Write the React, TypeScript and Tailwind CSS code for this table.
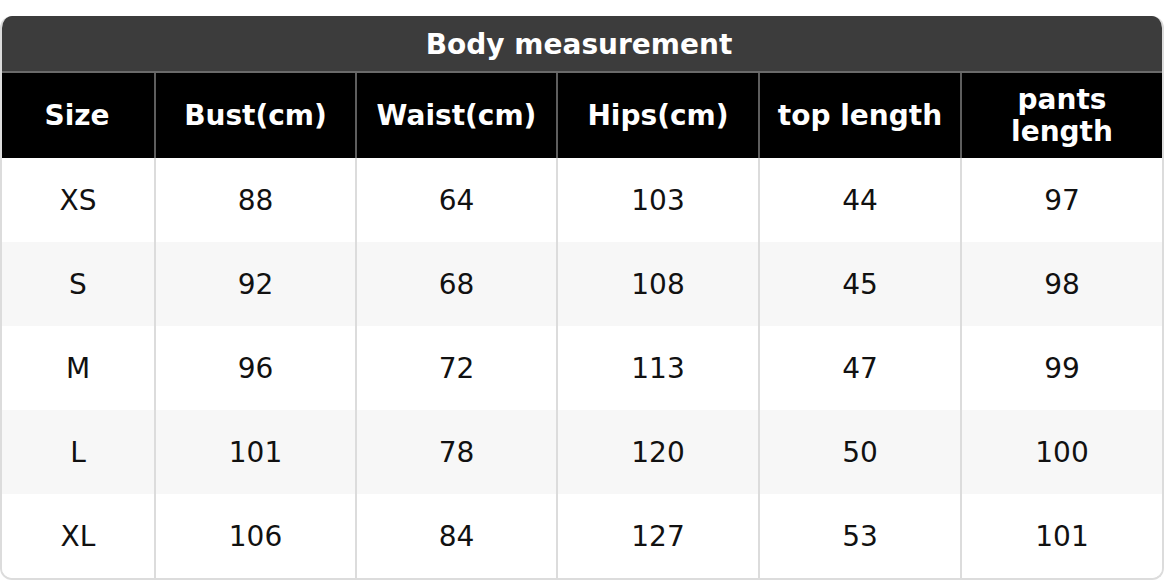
const headers = ["Size", "Bust(cm)", "Waist(cm)", "Hips(cm)", "top length", "pants length"];

const rows = [
  ["XS", "88", "64", "103", "44", "97"],
  ["S", "92", "68", "108", "45", "98"],
  ["M", "96", "72", "113", "47", "99"],
  ["L", "101", "78", "120", "50", "100"],
  ["XL", "106", "84", "127", "53", "101"],
];

const cols = "grid grid-cols-[156px_201px_201px_202px_202px_1fr]";

export default function App() {
  return (
    <div className="w-[1164px] h-[580px] bg-white pt-4 font-['DejaVu_Sans',sans-serif]">
      <div className="rounded-[12px] overflow-hidden border-2 border-t-0 border-[#dcdcdc] h-[564px] flex flex-col">
        <div className="h-[57px] bg-[#3c3c3c] flex items-center justify-center pt-[2px] pr-[6px] text-white font-bold text-[28px] border-b-2 border-[#6a6a6a] -mx-[2px]">
          Body measurement
        </div>
        <div className={`${cols} h-[85px] bg-black -ml-[2px]`}>
          {headers.map((h, i) => (
            <div
              key={h}
              className={`flex items-center justify-center text-center text-white font-bold text-[28px] leading-[32px] px-2 pt-[1px] ${i < headers.length - 1 ? "border-r-2 border-[#5e5e5e]" : ""}`}
            >
              {h}
            </div>
          ))}
        </div>
        {rows.map((r, ri) => (
          <div key={r[0]} className={`${cols} h-[84px] -ml-[2px] ${ri % 2 === 1 ? "bg-[#f7f7f7]" : "bg-white"}`}>
            {r.map((c, ci) => (
              <div
                key={ci}
                className={`flex items-center justify-center pt-[1px] text-[28px] text-[#111] ${ci === 0 ? "pl-[2px]" : ""} ${ci < r.length - 1 ? "border-r-2 border-[#dcdcdc]" : ""}`}
              >
                {c}
              </div>
            ))}
          </div>
        ))}
      </div>
    </div>
  );
}
